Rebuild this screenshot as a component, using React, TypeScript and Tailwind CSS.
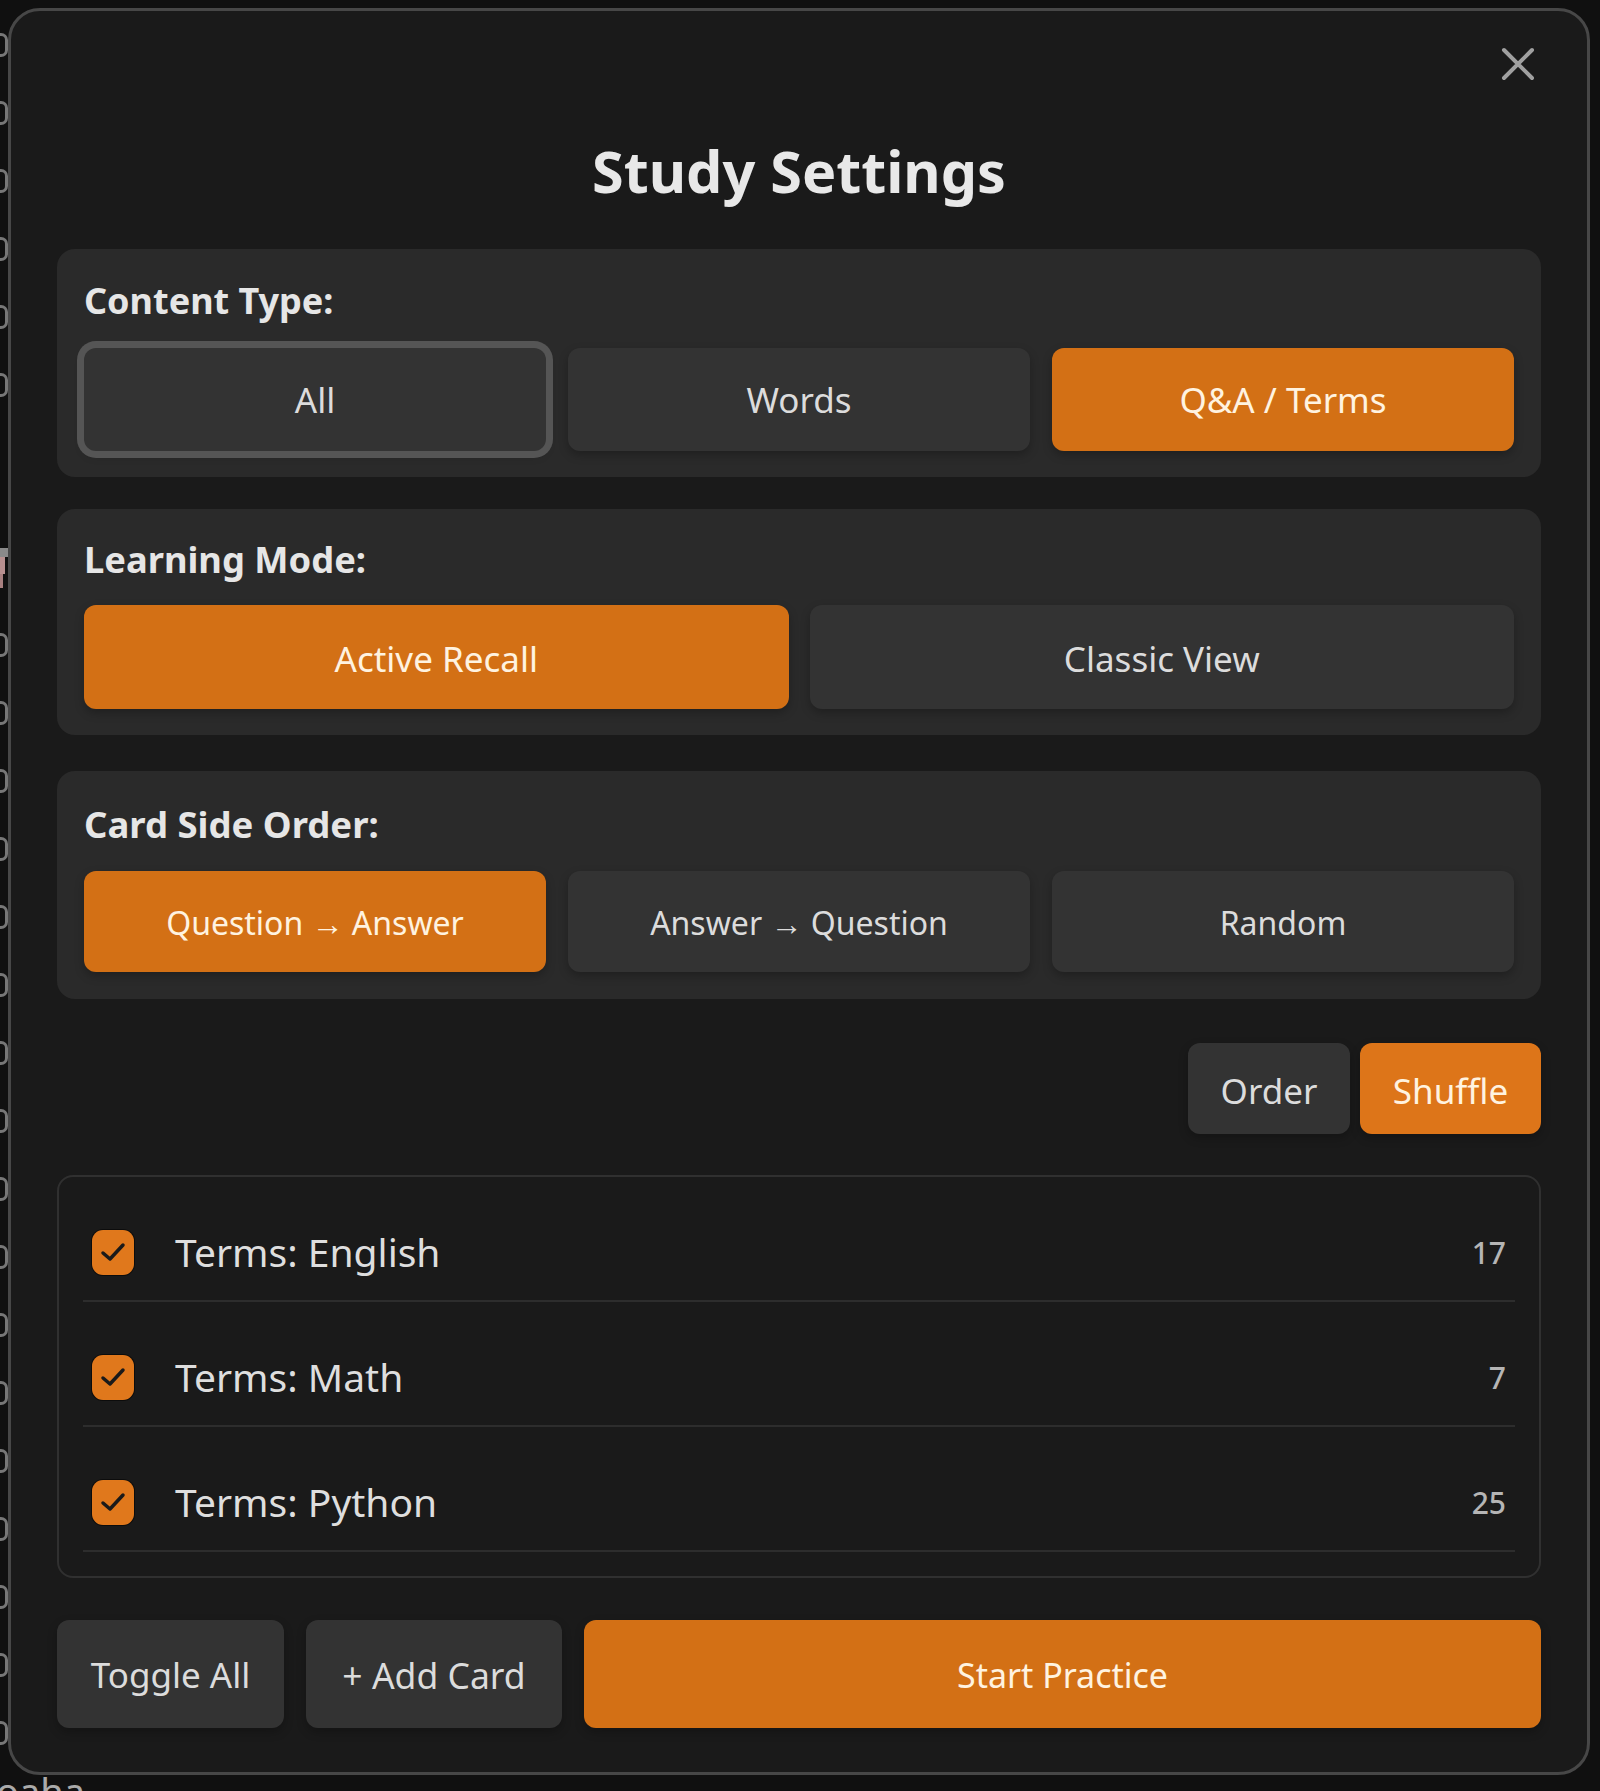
import { FC } from 'react';

const SANS = 'font-["Noto_Sans","Open_Sans",sans-serif]';

const BASE_BTN =
  'rounded-[12px] text-[35px] flex items-center justify-center shadow-[0_4px_10px_rgba(0,0,0,0.25)]';
const IDLE_BTN = 'bg-[#333333] text-[#dcdcdc]';
const ON_BTN = 'bg-[#d37015] text-[#fff3e0]';

interface IChoiceProps {
  label: string;
  on?: boolean;
  focused?: boolean;
  className?: string;
}

const Choice: FC<IChoiceProps> = ({ label, on, focused, className }) => (
  <button
    className={`${BASE_BTN} ${on ? ON_BTN : IDLE_BTN} ${focused ? 'ring-[7px] ring-[#555555]' : ''} ${className ?? ''}`}
  >
    {label}
  </button>
);

const Row: FC<{ name: string; count: number }> = ({ name, count }) => (
  <div className="h-[125px] pt-[27px] flex items-center border-b-2 border-[#2d2d2d]">
    <span className="w-[42px] h-[45px] ml-[9px] rounded-[11px] bg-[#e0781c] shadow-[0_0_0_1px_#0c0c0c] flex items-center justify-center">
      <svg width="26" height="22" viewBox="0 0 26 22" fill="none">
        <path d="M3 12l7 6L23 4" stroke="#1a1a1a" strokeWidth="3.5" strokeLinecap="round" strokeLinejoin="round" />
      </svg>
    </span>
    <span className="ml-[41px] text-[39px] text-[#dedede]">{name}</span>
    <span className="ml-auto mr-[9px] text-[30px] font-medium text-[#b5b5b5]">{count}</span>
  </div>
);

const Mark: FC = () => (
  <span className="shrink-0 w-[16px] h-[24px] -ml-[8px] rounded-[7px] border-[3px] border-[#777777]" />
);

const TOP_MARKS = Array.from({ length: 6 });
const LOWER_MARKS = Array.from({ length: 17 });

export default function App() {
  return (
    <div className={`w-[1600px] h-[1791px] overflow-hidden bg-[#101010] ${SANS}`}>
      <div className="h-[1776px] flex">
        <div className="w-[8px] shrink-0 pt-[33px] flex flex-col overflow-hidden">
          <div className="flex flex-col gap-[44px]">
            {TOP_MARKS.map((_, i) => (
              <Mark key={i} />
            ))}
          </div>
          {/* clipped glyph of the page behind the dialog */}
          <div className="mt-[151px] h-[40px] flex flex-col">
            <span className="h-[9px] w-[8px] bg-[#8a8a8a]" />
            <span className="h-[17px] w-[5px] bg-[#b89090]" />
            <span className="h-[14px] w-[3px] bg-[#a88080]" />
          </div>
          <div className="mt-[45px] flex flex-col gap-[44px]">
            {LOWER_MARKS.map((_, i) => (
              <Mark key={i} />
            ))}
          </div>
        </div>
        <div className="w-[1582px] h-[1767px] mt-[8px] rounded-[32px] border-[3px] border-[#474747] bg-[#1a1a1a] px-[46px] flex flex-col">
          <div className="h-[76px] pt-[36px] flex justify-end pr-[6px]">
            <svg width="34" height="34" viewBox="0 0 34 34" fill="none">
              <path d="M3 3l28 28M31 3L3 31" stroke="#a0a0a0" strokeWidth="4" strokeLinecap="round" />
            </svg>
          </div>
          <h1 className="mt-[54px] h-[60px] text-[57.5px] leading-[60px] font-bold text-center text-[#e8e8e8]">Study Settings</h1>

          <section className="mt-[48px] h-[228px] rounded-[18px] bg-[#2a2a2a] px-[27px] pt-[27px]">
            <p className="h-[50px] text-[36px] leading-[50px] font-bold text-[#e6e6e6]">Content Type:</p>
            <div className="mt-[22px] grid grid-cols-3 gap-[22px] h-[103px]">
              <Choice label="All" focused className="pt-[1px]" />
              <Choice label="Words" className="pt-[1px]" />
              <Choice label="Q&A / Terms" on className="pt-[1px]" />
            </div>
          </section>

          <section className="mt-[32px] h-[226px] rounded-[18px] bg-[#2a2a2a] px-[27px] pt-[25px]">
            <p className="h-[50px] text-[36.3px] leading-[50px] font-bold text-[#e6e6e6]">Learning Mode:</p>
            <div className="mt-[21px] grid grid-cols-2 gap-[21px] h-[104px]">
              <Choice label="Active Recall" on className="pt-[5px]" />
              <Choice label="Classic View" className="pt-[5px]" />
            </div>
          </section>

          <section className="mt-[36px] h-[228px] rounded-[18px] bg-[#2a2a2a] px-[27px] pt-[28px]">
            <p className="h-[50px] text-[36.5px] leading-[50px] font-bold text-[#e6e6e6]">Card Side Order:</p>
            <div className="mt-[22px] grid grid-cols-3 gap-[22px] h-[101px]">
              <Choice label="Question → Answer" on className="pt-[3px] !text-[32px]" />
              <Choice label="Answer → Question" className="pt-[3px] !text-[32px]" />
              <Choice label="Random" className="pt-[3px] !text-[32px]" />
            </div>
          </section>

          <div className="mt-[44px] flex justify-end gap-[10px] h-[91px]">
            <Choice label="Order" className="w-[162px] pt-[5px]" />
            <Choice label="Shuffle" on className="w-[181px] pt-[5px] !bg-[#dd7519]" />
          </div>

          <div className="mt-[41px] h-[403px] rounded-[16px] border-2 border-[#303030] px-[24px]">
            <Row name="Terms: English" count={17} />
            <Row name="Terms: Math" count={7} />
            <Row name="Terms: Python" count={25} />
          </div>

          <div className="mt-[42px] flex gap-[22px] h-[108px]">
            <Choice label="Toggle All" className="w-[227px] pt-[3px]" />
            <Choice label="+ Add Card" className="w-[256px] pt-[3px] !text-[35.5px]" />
            <Choice label="Start Practice" on className="flex-1 pt-[3px] !text-[34px]" />
          </div>
        </div>
      </div>
      <p className="-mt-[5px] -ml-[4px] text-[38px] leading-[40px] text-[#aaaaaa] whitespace-nowrap">oaha</p>
    </div>
  );
}
